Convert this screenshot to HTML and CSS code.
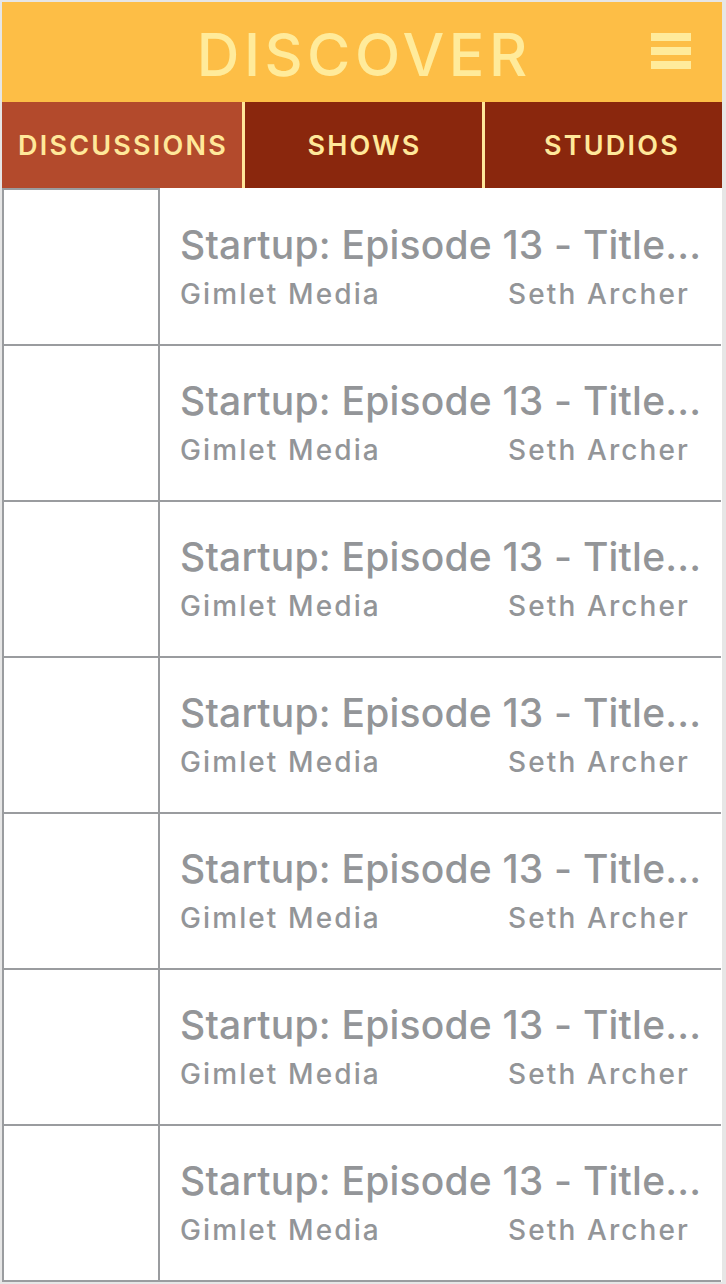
FILE: index.html
```html
<!DOCTYPE html>
<html>
<head>
<meta charset="utf-8">
<link rel="stylesheet" href="styles.css">
</head>
<body>
<div class="app">
  <header class="header">
    <div></div>
    <h1 class="title">DISCOVER</h1>
    <div class="menu"><span></span><span></span><span></span></div>
  </header>
  <nav class="tabs">
    <div class="tab active">DISCUSSIONS</div>
    <div class="divider"></div>
    <div class="tab">SHOWS</div>
    <div class="divider"></div>
    <div class="tab last">STUDIOS</div>
  </nav>
  <div class="list">
    <div class="row first"><div class="thumb"></div><div class="info"><div class="ep">Startup: Episode 13 - Title...</div><div class="meta"><span>Gimlet Media</span><span>Seth Archer</span></div></div></div>
    <div class="row"><div class="thumb"></div><div class="info"><div class="ep">Startup: Episode 13 - Title...</div><div class="meta"><span>Gimlet Media</span><span>Seth Archer</span></div></div></div>
    <div class="row"><div class="thumb"></div><div class="info"><div class="ep">Startup: Episode 13 - Title...</div><div class="meta"><span>Gimlet Media</span><span>Seth Archer</span></div></div></div>
    <div class="row"><div class="thumb"></div><div class="info"><div class="ep">Startup: Episode 13 - Title...</div><div class="meta"><span>Gimlet Media</span><span>Seth Archer</span></div></div></div>
    <div class="row"><div class="thumb"></div><div class="info"><div class="ep">Startup: Episode 13 - Title...</div><div class="meta"><span>Gimlet Media</span><span>Seth Archer</span></div></div></div>
    <div class="row"><div class="thumb"></div><div class="info"><div class="ep">Startup: Episode 13 - Title...</div><div class="meta"><span>Gimlet Media</span><span>Seth Archer</span></div></div></div>
    <div class="row"><div class="thumb"></div><div class="info"><div class="ep">Startup: Episode 13 - Title...</div><div class="meta"><span>Gimlet Media</span><span>Seth Archer</span></div></div></div>
  </div>
</div>
</body>
</html>
```
FILE: styles.css
```css
html, body {
  margin: 0;
  padding: 0;
  background: #e6e6e6;
}
body {
  font-family: Inter, "DejaVu Sans", sans-serif;
}
.app {
  margin: 2px;
  width: 720px;
  height: 1280px;
  background: #ffffff;
  overflow: hidden;
}
.header {
  height: 100px;
  background: #fdbe46;
  display: grid;
  grid-template-columns: 1fr auto 1fr;
  align-items: center;
}
.title {
  margin: 4px 0 0 0;
  font-size: 59px;
  font-weight: 500;
  letter-spacing: 4.5px;
  padding-left: 4.5px;
  color: #ffeb9b;
  line-height: 1;
}
.menu {
  justify-self: end;
  margin-right: 31px;
  display: flex;
  flex-direction: column;
  gap: 6px;
  margin-top: -2px;
}
.menu span {
  display: block;
  width: 40px;
  height: 8px;
  background: #ffeb9b;
}
.tabs {
  height: 86px;
  display: grid;
  grid-template-columns: 240px 3px 237px 3px 237px;
  background: #8a270d;
}
.tab {
  display: flex;
  align-items: center;
  justify-content: center;
  color: #ffe89a;
  font-size: 27px;
  font-weight: 600;
  letter-spacing: 2.2px;
  padding-left: 2px;
  white-space: nowrap;
}
.tab.active {
  background: #b34a2c;
}
.tab.last {
  padding-left: 17px;
}
.divider {
  background: #ffe79a;
}
.list {
  display: flex;
  flex-direction: column;
}
.row {
  height: 156px;
  display: flex;
  border-bottom: 2px solid #9a9c9f;
  box-sizing: border-box;
  margin-right: 1px;
}
.row.first {
  height: 158px;
}
.thumb {
  width: 154px;
  border-left: 2px solid #9a9c9f;
  border-right: 2px solid #9a9c9f;
  flex: none;
}
.row.first .thumb {
  border-top: 2px solid #9a9c9f;
}
.row.first .info {
  margin-top: 2px;
}
.info {
  flex: 1;
  display: flex;
  flex-direction: column;
  justify-content: center;
  padding: 0 31px 1px 20px;
  color: #939598;
  min-width: 0;
}
.ep {
  font-size: 39px;
  font-weight: 500;
  letter-spacing: 0.2px;
  line-height: 44px;
  white-space: nowrap;
}
.meta {
  display: flex;
  justify-content: space-between;
  margin-top: 10px;
  font-size: 28px;
  font-weight: 500;
  letter-spacing: 2.1px;
  line-height: 34px;
  white-space: nowrap;
}
```
